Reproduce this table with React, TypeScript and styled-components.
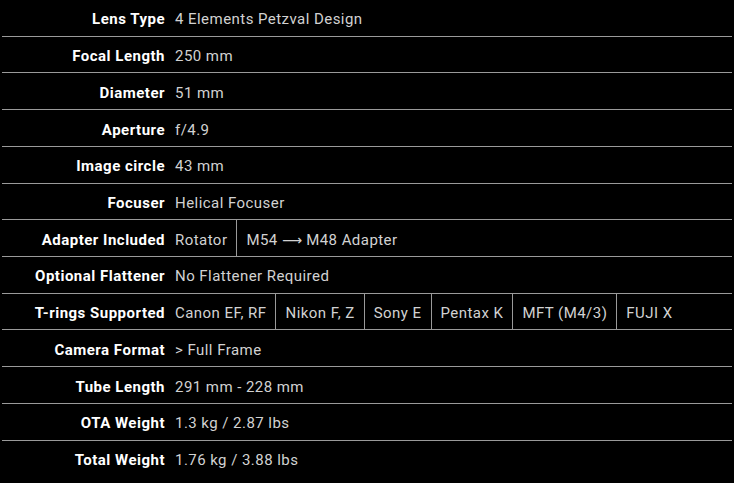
import React from "react";
import styled, { createGlobalStyle } from "styled-components";

const Global = createGlobalStyle`
  html, body { margin: 0; padding: 0; background: #000; }
  body { font-family: Roboto, "Liberation Sans", sans-serif; }
`;

const Table = styled.div`
  background: #000;
  padding: 0 2px;
  width: 734px;
  box-sizing: border-box;
`;

const Row = styled.div<{ $last?: boolean }>`
  display: flex;
  align-items: stretch;
  height: 36.73px;
  box-sizing: border-box;
  border-bottom: ${(p) => (p.$last ? "none" : "1px solid #9a9a9a")};
`;

const Label = styled.div`
  flex: 0 0 164px;
  box-sizing: border-box;
  padding: 3px 1px 0 0;
  display: flex;
  align-items: center;
  justify-content: flex-end;
  font-size: 15px;
  letter-spacing: 0.5px;
  font-weight: 700;
  color: #ffffff;
  white-space: nowrap;
`;

const Values = styled.div`
  display: flex;
  align-items: stretch;
`;

const Value = styled.div`
  display: flex;
  align-items: center;
  padding: 3px 9px 0;
  font-size: 15px;
  letter-spacing: 0.45px;
  color: #d2d2d2;
  white-space: nowrap;
  & + & {
    border-left: 1px solid #9a9a9a;
  }
`;

const Arrow = styled.span`
  font-family: "DejaVu Sans", sans-serif;
  font-size: 14px;
  letter-spacing: 0;
`;

type Item = React.ReactNode;

const rows: [string, Item[]][] = [
  ["Lens Type", ["4 Elements Petzval Design"]],
  ["Focal Length", ["250 mm"]],
  ["Diameter", ["51 mm"]],
  ["Aperture", ["f/4.9"]],
  ["Image circle", ["43 mm"]],
  ["Focuser", ["Helical Focuser"]],
  [
    "Adapter Included",
    [
      "Rotator",
      <span>
        M54 <Arrow>{"\u27F6"}</Arrow> M48 Adapter
      </span>,
    ],
  ],
  ["Optional Flattener", ["No Flattener Required"]],
  ["T-rings Supported", ["Canon EF, RF", "Nikon F, Z", "Sony E", "Pentax K", "MFT (M4/3)", "FUJI X"]],
  ["Camera Format", ["> Full Frame"]],
  ["Tube Length", ["291 mm - 228 mm"]],
  ["OTA Weight", ["1.3 kg / 2.87 lbs"]],
  ["Total Weight", ["1.76 kg / 3.88 lbs"]],
];

export default function App() {
  return (
    <>
      <Global />
      <Table>
        {rows.map(([label, vals], i) => (
          <Row key={label} $last={i === rows.length - 1}>
            <Label>{label}</Label>
            <Values>
              {vals.map((v, j) => (
                <Value key={j}>{v}</Value>
              ))}
            </Values>
          </Row>
        ))}
      </Table>
    </>
  );
}
